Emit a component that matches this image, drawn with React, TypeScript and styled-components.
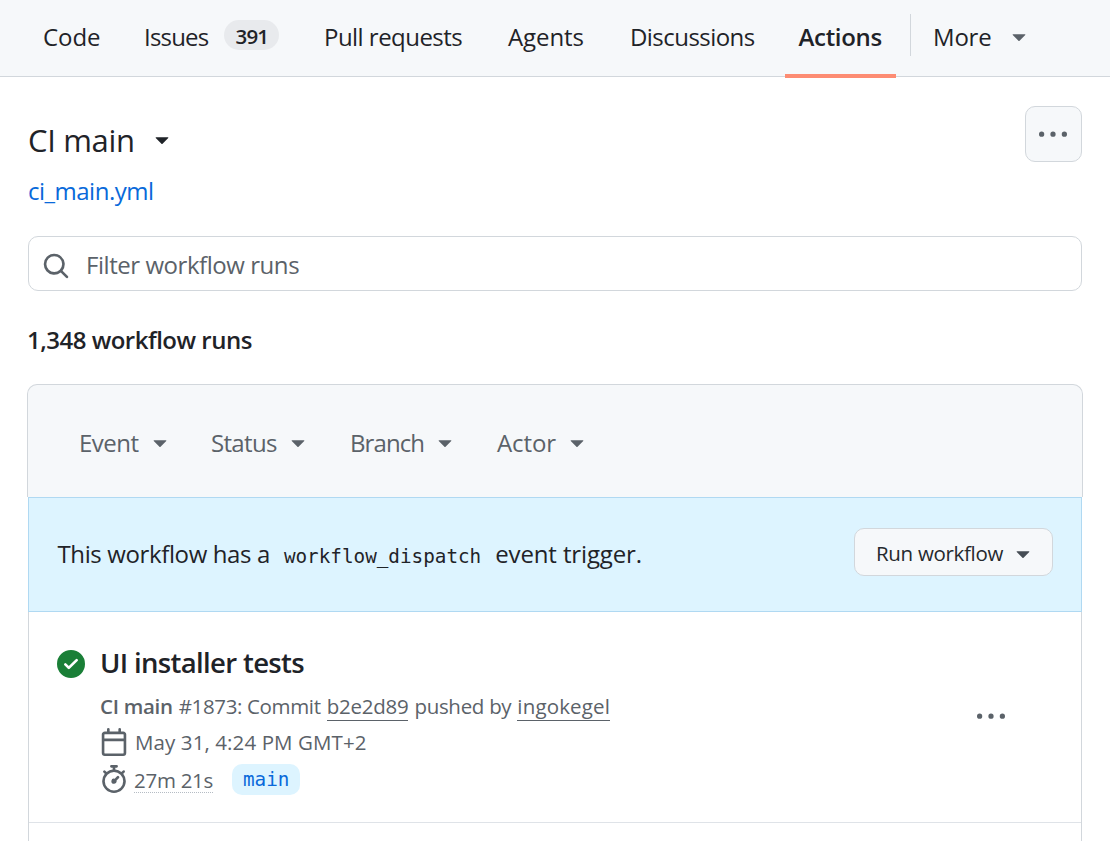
import React from "react";
import styled, { createGlobalStyle } from "styled-components";

const GlobalStyle = createGlobalStyle`
  * { box-sizing: border-box; }
  body {
    margin: 0;
    height: 841px;
    overflow: hidden;
    background: #fff;
    color: #1f2328;
    font: 400 24px/36px "Open Sans", "Noto Sans", sans-serif;
  }
`;

const mono = `"DejaVu Sans Mono", "Liberation Mono", monospace`;
const muted = "#5b6269";
const line = "#d2d7dc";

const Text = styled.span<{ $track?: number; $bold?: boolean }>`
  letter-spacing: ${(p) => p.$track ?? 0}px;
  font-weight: ${(p) => (p.$bold ? 600 : "inherit")};
  white-space: nowrap;
`;

const Page = styled.div`
  height: 841px;
  overflow: hidden;
`;

const NavBar = styled.nav`
  display: flex;
  height: 77px;
  padding-left: 29px;
  background: #f6f8fa;
  border-bottom: 1px solid ${line};
`;

const Tabs = styled.div`
  display: grid;
  grid-template-columns: 101px 180px 184px 122px 169px 111px;
  height: 78px;
`;

const Tab = styled.a<{ $active?: boolean }>`
  display: flex;
  align-items: center;
  gap: 16px;
  height: 78px;
  padding: 0 0 0 ${(p) => (p.$active ? 13.5 : 14)}px;
  border-bottom: 4px solid ${(p) => (p.$active ? "#fd8c73" : "transparent")};
`;

const Counter = styled.span`
  display: flex;
  align-items: center;
  justify-content: center;
  width: 55px;
  height: 30px;
  margin-top: -4px;
  padding-top: 1px;
  border-radius: 15px;
  background: #e8eaed;
  font-size: 20.5px;
  font-weight: 600;
`;

const MoreButton = styled.div`
  display: flex;
  align-items: center;
  gap: 13px;
  height: 42px;
  margin: 14px 0 0 14px;
  padding: 4px 0 0 22px;
  border-left: 1px solid ${line};
`;

const Icon = styled.svg<{ $color?: string; $lift?: number }>`
  display: block;
  flex: none;
  width: 28px;
  height: 28px;
  margin-bottom: ${(p) => (p.$lift ?? 0) * 2}px;
  fill: ${(p) => p.$color ?? muted};
`;

const Content = styled.main`
  padding: 29px 28px 0;
`;

const Heading = styled.header`
  display: flex;
  justify-content: space-between;
  height: 130px;
`;

const TitleRow = styled.h1`
  display: flex;
  align-items: center;
  gap: 13px;
  height: 56px;
  margin: 6px 0 0;
  font-size: 31px;
  font-weight: 400;
`;

const FileLink = styled.a`
  display: block;
  margin-top: 5px;
  color: #0969da;
`;

const IconButton = styled.button`
  display: flex;
  align-items: center;
  justify-content: center;
  width: 57px;
  height: 56px;
  padding: 1px 2px 0 0;
  border: 1px solid ${line};
  border-radius: 10px;
  background: #f6f8fa;
`;

const SearchBox = styled.div`
  display: flex;
  align-items: center;
  gap: 16px;
  height: 55px;
  padding: 2px 14px 0 13px;
  border: 1px solid ${line};
  border-radius: 10px;
  color: ${muted};
`;

const RunCount = styled.div`
  height: 93px;
  margin-left: -1px;
  padding-top: 31px;
`;

const Filters = styled.div`
  display: grid;
  grid-template-columns: 132px 139px 147px 110px;
  height: 113px;
  margin: 0 -1px;
  padding: 3px 0 0 51px;
  border: 1px solid ${line};
  border-bottom: 0;
  border-radius: 10px 10px 0 0;
  background: #f6f8fa;
  color: ${muted};
`;

const Filter = styled.div<{ $gap: number }>`
  display: flex;
  align-items: center;
  gap: ${(p) => p.$gap}px;
`;

const Runs = styled.section`
  height: 400px;
  border: 1px solid ${line};
  border-top: 0;
`;

const Dispatch = styled.div`
  display: flex;
  align-items: center;
  justify-content: space-between;
  height: 115px;
  margin: 0 -1px;
  padding: 0 28px 0 28.5px;
  border: 1px solid #b0d9f2;
  background: #ddf4ff;
`;

const DispatchText = styled.div`
  padding-top: 2px;
`;

const Code = styled.code`
  margin: 0 14px;
  font-family: ${mono};
  font-size: 19.3px;
  vertical-align: -0.5px;
`;

const RunButton = styled.button`
  display: flex;
  align-items: center;
  gap: 6px;
  width: 199px;
  height: 48px;
  margin-bottom: 6px;
  padding: 2px 0 0 21px;
  border: 1px solid ${line};
  border-radius: 10px;
  background: #f6f8fa;
  color: #25292e;
  font: inherit;
  font-size: 20.5px;
`;

const Run = styled.article`
  display: flex;
  height: 211px;
  padding: 33px 76px 0 28px;
  border-bottom: 1px solid #dfe3e8;
`;

const StatusIcon = styled.div`
  width: 43px;
  padding-top: 4.5px;
`;

const RunBody = styled.div`
  flex: 1;
  color: ${muted};
  font-size: 20.5px;
`;

const RunTitle = styled.div`
  height: 43px;
  color: #1f2328;
  font-size: 27.5px;
  line-height: 36px;
`;

const MetaLine = styled.div<{ $gap: number; $height?: number }>`
  display: flex;
  align-items: center;
  gap: ${(p) => p.$gap}px;
  height: ${(p) => p.$height ?? 37}px;
`;

const Underlined = styled(Text)`
  height: 30px;
  line-height: 30px;
  border-bottom: 1px solid ${muted};
`;

const Duration = styled(Text)`
  height: 28px;
  line-height: 30px;
  border-bottom: 1px dotted #b5bcc4;
`;

const BranchLabel = styled.span`
  display: flex;
  align-items: center;
  width: 68px;
  height: 31px;
  margin-left: 13px;
  padding: 1px 0 0 11px;
  border-radius: 10px;
  background: #ddf4ff;
  color: #0969da;
  font-family: ${mono};
  font-size: 19.3px;
`;

const RunMenu = styled.div`
  padding-top: 58px;
`;

const paths = {
  caret:
    "m4.427 7.427 3.396 3.396a.25.25 0 0 0 .354 0l3.396-3.396A.25.25 0 0 0 11.396 7H4.604a.25.25 0 0 0-.177.427Z",
  search:
    "M10.68 11.74a6 6 0 0 1-7.922-8.982 6 6 0 0 1 8.982 7.922l3.04 3.04a.749.749 0 0 1-.326 1.275.749.749 0 0 1-.734-.215ZM11.5 7a4.499 4.499 0 1 0-8.997 0A4.499 4.499 0 0 0 11.5 7Z",
  kebab:
    "M8 9a1.5 1.5 0 1 0 0-3 1.5 1.5 0 0 0 0 3ZM1.5 9a1.5 1.5 0 1 0 0-3 1.5 1.5 0 0 0 0 3Zm13 0a1.5 1.5 0 1 0 0-3 1.5 1.5 0 0 0 0 3Z",
  check:
    "M8 16A8 8 0 1 1 8 0a8 8 0 0 1 0 16Zm3.78-9.72a.751.751 0 0 0-.018-1.042.751.751 0 0 0-1.042-.018L6.75 9.19 5.28 7.72a.751.751 0 0 0-1.042.018.751.751 0 0 0-.018 1.042l2 2a.75.75 0 0 0 1.06 0Z",
  calendar:
    "M4.75 0a.75.75 0 0 1 .75.75V2h5V.75a.75.75 0 0 1 1.5 0V2h1.25c.966 0 1.75.784 1.75 1.75v10.5A1.75 1.75 0 0 1 13.25 16H2.75A1.75 1.75 0 0 1 1 14.25V3.75C1 2.784 1.784 2 2.75 2H4V.75A.75.75 0 0 1 4.75 0ZM2.5 7.5v6.75c0 .138.112.25.25.25h10.5a.25.25 0 0 0 .25-.25V7.5Zm10.75-4H2.75a.25.25 0 0 0-.25.25V6h11V3.75a.25.25 0 0 0-.25-.25Z",
  stopwatch:
    "M5.75.75A.75.75 0 0 1 6.5 0h3a.75.75 0 0 1 0 1.5h-.75v1l-.001.041a6.724 6.724 0 0 1 3.464 1.435l.007-.006.75-.75a.749.749 0 0 1 1.275.326.749.749 0 0 1-.215.734l-.75.75-.006.007a6.75 6.75 0 1 1-10.548 0L2.72 5.03l-.75-.75a.751.751 0 0 1 .018-1.042.751.751 0 0 1 1.042-.018l.75.75.007.006A6.72 6.72 0 0 1 7.25 2.541V1.5H6.5a.75.75 0 0 1-.75-.75ZM8 14.5a5.25 5.25 0 1 0-.001-10.501A5.25 5.25 0 0 0 8 14.5Zm.389-6.7 1.33-1.33a.75.75 0 1 1 1.061 1.06L9.45 8.861A1.503 1.503 0 0 1 8 10.75a1.499 1.499 0 1 1 .389-2.95Z",
};

type GlyphProps = { name: keyof typeof paths; color?: string; lift?: number };

function Glyph({ name, color, lift }: GlyphProps) {
  return (
    <Icon viewBox="0 0 16 16" $color={color} $lift={lift} aria-hidden="true">
      <path d={paths[name]} />
    </Icon>
  );
}

const tabs = [
  { label: "Code", track: -0.08 },
  { label: "Issues", track: -0.8, count: "391" },
  { label: "Pull requests", track: -0.53 },
  { label: "Agents", track: -0.1 },
  { label: "Discussions", track: -0.55 },
  { label: "Actions", track: -0.31, active: true },
];

const filters = [
  { label: "Event", track: -0.5, gap: 7 },
  { label: "Status", track: -0.67, gap: 7 },
  { label: "Branch", track: -0.9, gap: 6.6 },
  { label: "Actor", track: -0.1, gap: 7.3 },
];

export default function App() {
  return (
    <Page>
      <GlobalStyle />
      <NavBar>
        <Tabs>
          {tabs.map((t) => (
            <Tab key={t.label} $active={t.active}>
              <Text $track={t.track} $bold={t.active}>{t.label}</Text>
              {t.count && (
                <Counter>
                  <Text $track={-0.8}>{t.count}</Text>
                </Counter>
              )}
            </Tab>
          ))}
        </Tabs>
        <MoreButton>
          <Text $track={-0.2}>More</Text>
          <Glyph name="caret" lift={1} />
        </MoreButton>
      </NavBar>

      <Content>
        <Heading>
          <div>
            <TitleRow>
              <Text $track={-0.33}>CI main</Text>
              <Glyph name="caret" color="#1f2328" lift={1} />
            </TitleRow>
            <FileLink>
              <Text $track={-0.5}>ci_main.yml</Text>
            </FileLink>
          </div>
          <IconButton aria-label="Workflow options">
            <Glyph name="kebab" />
          </IconButton>
        </Heading>

        <SearchBox>
          <Glyph name="search" lift={-1} />
          <Text $track={-0.45}>Filter workflow runs</Text>
        </SearchBox>

        <RunCount>
          <Text $bold $track={-0.5}>1,348 workflow runs</Text>
        </RunCount>

        <Filters>
          {filters.map((f) => (
            <Filter key={f.label} $gap={f.gap}>
              <Text $track={f.track}>{f.label}</Text>
              <Glyph name="caret" lift={1} />
            </Filter>
          ))}
        </Filters>

        <Runs>
          <Dispatch>
            <DispatchText>
              <Text $track={-0.38}>This workflow has a</Text>
              <Code>workflow_dispatch</Code>
              <Text $track={-0.13}>event trigger.</Text>
            </DispatchText>
            <RunButton>
              <Text $track={-0.31}>Run workflow</Text>
              <Glyph name="caret" color="#454c54" />
            </RunButton>
          </Dispatch>

          <Run>
            <StatusIcon>
              <Glyph name="check" color="#1a7f37" />
            </StatusIcon>
            <RunBody>
              <RunTitle>
                <Text $bold $track={-0.66}>UI installer tests</Text>
              </RunTitle>
              <MetaLine $gap={6} $height={36}>
                <Text $bold $track={-0.3}>CI main</Text>
                <Text $track={-0.35}>#1873: Commit</Text>
                <Underlined $track={-0.25}>b2e2d89</Underlined>
                <Text $track={-0.3}>pushed by</Text>
                <Underlined $track={0.15}>ingokegel</Underlined>
              </MetaLine>
              <MetaLine $gap={7} $height={36}>
                <Glyph name="calendar" />
                <Text $track={0.1}>May 31, 4:24 PM GMT+2</Text>
              </MetaLine>
              <MetaLine $gap={6} $height={38}>
                <Glyph name="stopwatch" lift={0.5} />
                <Duration $track={-0.28}>27m 21s</Duration>
                <BranchLabel>main</BranchLabel>
              </MetaLine>
            </RunBody>
            <RunMenu>
              <Glyph name="kebab" />
            </RunMenu>
          </Run>
        </Runs>
      </Content>
    </Page>
  );
}
